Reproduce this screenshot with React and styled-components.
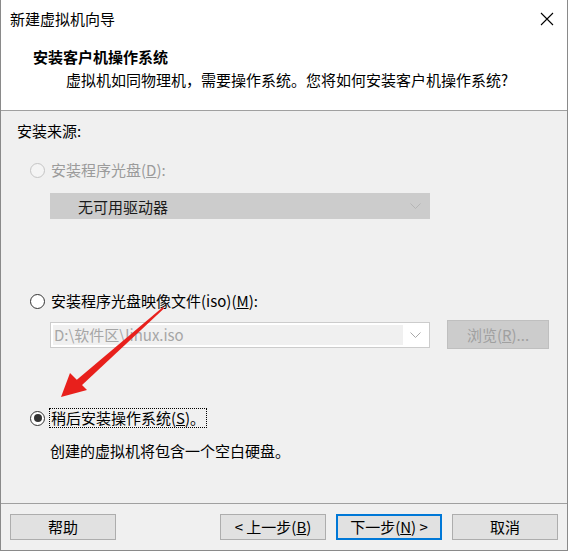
import React from "react";
import styled, { createGlobalStyle, css } from "styled-components";

const Global = createGlobalStyle`
  html, body { margin: 0; padding: 0; background: #ffffff; }
  body { font-family: "Noto Sans CJK SC", "Noto Sans", sans-serif; font-size: 15px; color: #000; }
  * { box-sizing: border-box; }
`;

const Window = styled.div`
  position: relative;
  width: 568px;
  height: 551px;
  border: 1px solid #8a8a8a;
  border-top: none;
  background: #f0f0f0;
  display: flex;
  flex-direction: column;
`;

const Top = styled.div`
  background: #ffffff;
  border-bottom: 1px solid #a0a0a0;
  height: 111px;
  display: flex;
  flex-direction: column;
`;

const TitleBar = styled.div`
  height: 38px;
  display: flex;
  align-items: center;
  justify-content: space-between;
  padding: 0 13px 0 9px;
  line-height: 22px;
`;

const Close = styled.div`
  width: 14px;
  height: 14px;
  display: flex;
`;

const Header = styled.div`
  padding-top: 8px;
  display: flex;
  flex-direction: column;
`;

const Heading = styled.div`
  font-weight: 700;
  line-height: 22px;
  padding-left: 32px;
`;

const Sub = styled.div`
  line-height: 22px;
  padding-left: 65px;
  margin-top: 1px;
`;

const Body = styled.div`
  flex: 1;
  padding: 9px 0 0 16px;
  display: flex;
  flex-direction: column;
`;

const Line = styled.div`
  line-height: 22px;
  margin-top: ${(p) => p.$mt || 0}px;
  padding-left: ${(p) => p.$pl || 0}px;
  color: ${(p) => (p.$disabled ? "#9b9b9b" : "#000")};
`;

const RadioRow = styled.div`
  display: flex;
  align-items: center;
  height: 22px;
  margin-top: ${(p) => p.$mt}px;
  padding-left: 13px;
  gap: 5px;
  color: ${(p) => (p.$disabled ? "#9b9b9b" : "#000")};
`;

const Circle = styled.span`
  width: 15px;
  height: 15px;
  border-radius: 50%;
  border: 1px solid ${(p) => (p.$disabled ? "#c4c4c4" : "#333333")};
  background: ${(p) => (p.$disabled ? "#f4f4f4" : "#ffffff")};
  display: flex;
  align-items: center;
  justify-content: center;
  flex: none;
  &::after {
    content: "";
    width: 8px;
    height: 8px;
    border-radius: 50%;
    background: #333333;
    display: ${(p) => (p.$checked ? "block" : "none")};
  }
`;

const Label = styled.span`
  line-height: 18px;
  padding: 0 1px;
  border: 1px dotted ${(p) => (p.$focus ? "#000" : "transparent")};
  margin-left: -1px;
`;

const Indent = styled.div`
  display: flex;
  align-items: center;
  gap: 17px;
  padding-left: 33px;
  margin-top: ${(p) => p.$mt}px;
`;

const Select = styled.div`
  width: 380px;
  height: 26px;
  display: flex;
  align-items: center;
  border: 1px solid #cccccc;
  ${(p) =>
    p.$grey
      ? css`
          background: #cccccc;
          padding-left: 27px;
          color: #1a1a1a;
        `
      : css`
          background: #ffffff;
          padding: 2px;
          color: #a6a6a6;
        `}
`;

const Field = styled.div`
  flex: 1;
  height: 100%;
  display: flex;
  align-items: center;
  padding-left: ${(p) => (p.$inner ? 1 : 0)}px;
  background: ${(p) => (p.$inner ? "#f0f0f0" : "transparent")};
`;

const Chevron = styled.div`
  width: 24px;
  height: 100%;
  display: flex;
  align-items: center;
  justify-content: center;
  padding-right: ${(p) => (p.$grey ? 4 : 0)}px;
`;

const Button = styled.div`
  width: ${(p) => p.$w || 106}px;
  height: ${(p) => p.$h || 26}px;
  display: flex;
  align-items: center;
  justify-content: center;
  background: ${(p) => (p.$disabled ? "#cccccc" : "#e1e1e1")};
  border: ${(p) =>
    p.$primary ? "2px solid #0078d7" : p.$disabled ? "1px solid #bfbfbf" : "1px solid #adadad"};
  color: ${(p) => (p.$disabled ? "#a0a0a0" : "#000")};
  line-height: 20px;
  flex: none;
`;

const Footer = styled.div`
  border-top: 1px solid #a0a0a0;
  padding: 10px 9px 10px 9px;
  display: flex;
  gap: 10px;
`;

const Spacer = styled.div`
  flex: 1;
`;

const Arrow = styled.svg`
  position: absolute;
  left: 0;
  top: 0;
  pointer-events: none;
`;

const ChevronIcon = ({ color }) => (
  <svg width="11" height="6" viewBox="0 0 11 6">
    <polyline points="0.5,0.5 5.5,5.5 10.5,0.5" fill="none" stroke={color} strokeWidth="1" />
  </svg>
);

export default function App() {
  return (
    <>
      <Global />
      <Window>
        <Top>
          <TitleBar>
            <span>新建虚拟机向导</span>
            <Close>
              <svg width="14" height="14" viewBox="0 0 14 14">
                <path d="M1 1 L13 13 M13 1 L1 13" stroke="#000" strokeWidth="1.1" />
              </svg>
            </Close>
          </TitleBar>
          <Header>
            <Heading>安装客户机操作系统</Heading>
            <Sub>虚拟机如同物理机，需要操作系统。您将如何安装客户机操作系统?</Sub>
          </Header>
        </Top>
        <Body>
          <Line>安装来源:</Line>
          <RadioRow $mt={17} $disabled>
            <Circle $disabled />
            <Label>
              安装程序光盘(<u>D</u>):
            </Label>
          </RadioRow>
          <Indent $mt={12}>
            <Select $grey>
              <Field>无可用驱动器</Field>
              <Chevron $grey>
                <ChevronIcon color="#b5b5b5" />
              </Chevron>
            </Select>
          </Indent>
          <RadioRow $mt={71}>
            <Circle />
            <Label>
              安装程序光盘映像文件(iso)(<u>M</u>):
            </Label>
          </RadioRow>
          <Indent $mt={8}>
            <Select>
              <Field $inner>D:\软件区\linux.iso</Field>
              <Chevron>
                <ChevronIcon color="#a8a8a8" />
              </Chevron>
            </Select>
            <Button $disabled $h={29} $w={102}>
              浏览(<u>R</u>)...
            </Button>
          </Indent>
          <RadioRow $mt={58}>
            <Circle $checked />
            <Label $focus>
              稍后安装操作系统(<u>S</u>)。
            </Label>
          </RadioRow>
          <Line $mt={11} $pl={33}>
            创建的虚拟机将包含一个空白硬盘。
          </Line>
        </Body>
        <Footer>
          <Button>帮助</Button>
          <Spacer />
          <Button>
            &lt; 上一步(<u>B</u>)
          </Button>
          <Button $primary>
            下一步(<u>N</u>) &gt;
          </Button>
          <Button>取消</Button>
        </Footer>
        <Arrow width="568" height="551" viewBox="0 0 568 551">
          <polygon points="162,307 163,308.5 80,386 75,380.5" fill="#e8201c" />
          <polygon points="60,397 69,373 86,390" fill="#e8201c" />
        </Arrow>
      </Window>
    </>
  );
}
